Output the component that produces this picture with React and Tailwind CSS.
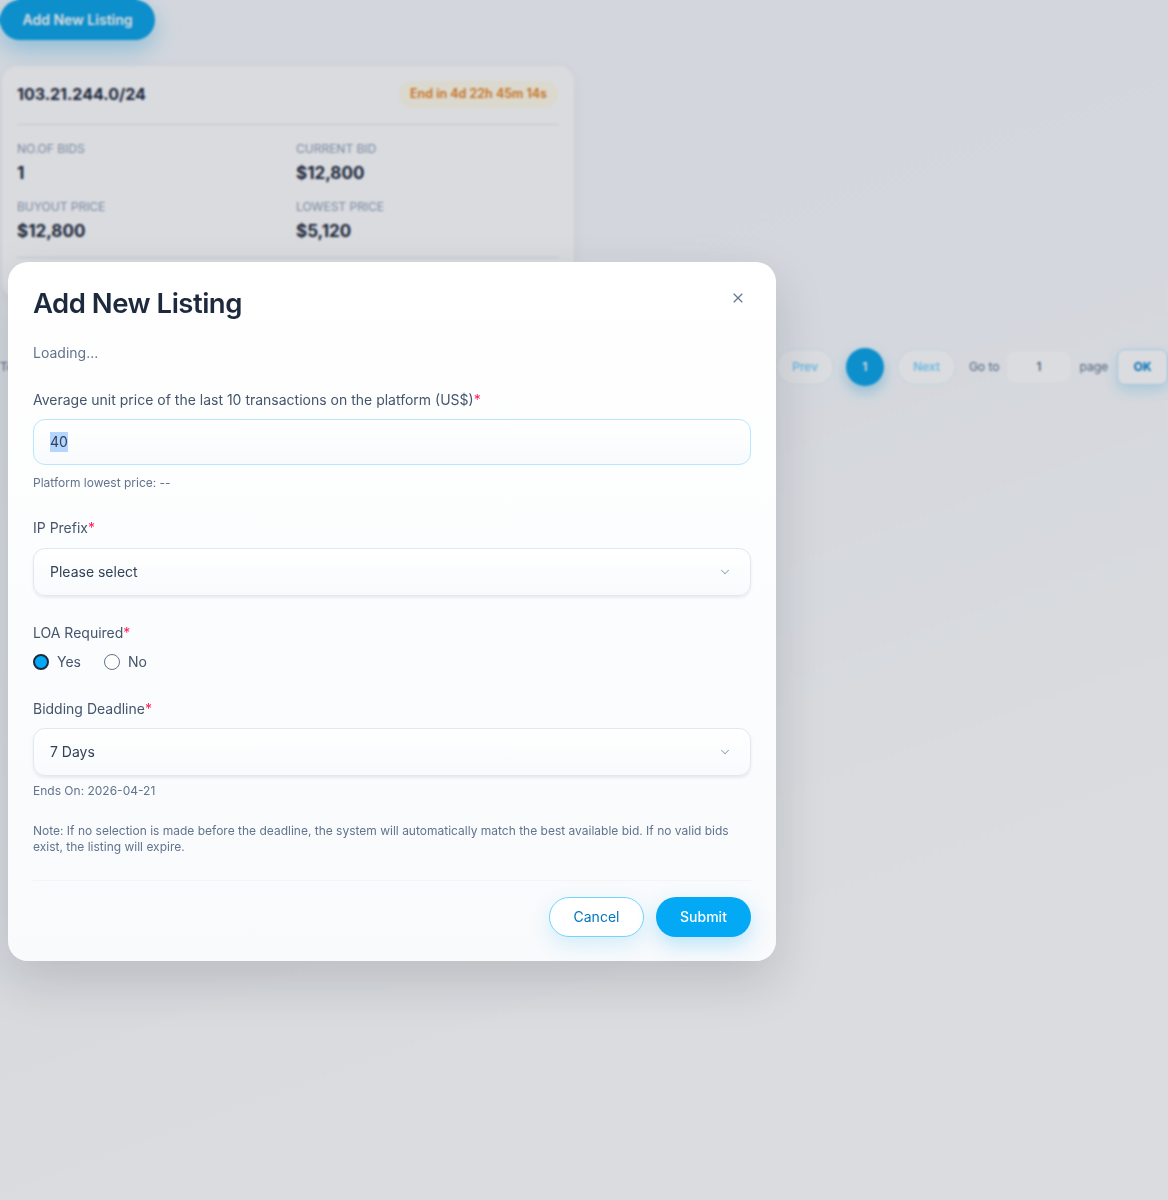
import { ChevronDown, X } from "lucide-react";

export default function App() {
  return (
    <div
      className="relative min-h-[1200px] w-full overflow-hidden bg-[linear-gradient(160deg,#f6f9fd_0%,#f7fafd_40%,#ffffff_75%)]"
      style={{ fontFamily: "Inter, 'Noto Sans', sans-serif" }}
    >
      {/* page behind the dialog */}
      <div className="flex flex-col">
        <div>
          <button className="h-[40px] w-[155px] rounded-full bg-[#0ea5e9] text-sm font-semibold text-white shadow-[0_10px_24px_rgba(14,165,233,0.35)]">
            Add New Listing
          </button>
        </div>

        <div className="ml-[2px] mt-[26px] w-[572px] rounded-2xl bg-white/80 px-[15px] pt-[15px] pb-[40px] shadow-[0_4px_16px_rgba(15,23,42,0.06)]">
          <div className="flex items-center justify-between border-b border-slate-200 pb-[16px]">
            <span className="text-base font-bold text-slate-800">103.21.244.0/24</span>
            <span className="mr-[1px] rounded-full bg-amber-50 px-[11px] py-[4px] text-[12.5px] font-semibold text-[#e8811a]">
              End in 4d 22h 45m 14s
            </span>
          </div>
          <div className="grid grid-cols-[279px_1fr] gap-y-[14px] border-b border-slate-200 pt-[16px] pb-[14px]">
            <Stat label="NO.OF BIDS" value="1" />
            <Stat label="CURRENT BID" value="$12,800" />
            <Stat label="BUYOUT PRICE" value="$12,800" />
            <Stat label="LOWEST PRICE" value="$5,120" />
          </div>
        </div>

        <div className="mt-[50px] flex items-center justify-between">
          <span className="text-xs text-slate-500">Total 1 items</span>
          <div className="flex items-center">
            <button className="h-[36px] w-[58px] rounded-full border border-sky-100 bg-white text-xs font-medium text-sky-300">
              Prev
            </button>
            <button className="ml-[12px] h-[38px] w-[38px] rounded-full bg-[#0ea5e9] text-xs font-semibold text-white shadow-[0_6px_14px_rgba(14,165,233,0.35)]">
              1
            </button>
            <button className="ml-[13px] h-[36px] w-[59px] rounded-full border border-sky-100 bg-white text-xs font-medium text-sky-300">
              Next
            </button>
            <span className="ml-[13px] text-xs text-slate-500">Go to</span>
            <div className="ml-[8px] flex h-[30px] w-[63px] items-center justify-center rounded-lg bg-white text-xs text-slate-700">
              1
            </div>
            <span className="ml-[9px] text-xs text-slate-500">page</span>
            <button className="ml-[9px] h-[36px] w-[51px] rounded-lg border border-sky-200 bg-white text-xs font-bold text-sky-600 shadow-[0_6px_14px_rgba(14,165,233,0.2)]">
              OK
            </button>
          </div>
        </div>
      </div>

      {/* overlay */}
      <div className="absolute inset-0 bg-[#0f172a]/[0.15] backdrop-blur-[1px]" />

      {/* dialog */}
      <div className="absolute left-[8px] top-[262px] w-[768px] rounded-[20px] bg-[linear-gradient(180deg,#ffffff_0%,#f8fafc_100%)] px-[25px] pt-[24px] pb-[24px] shadow-[0_20px_50px_rgba(15,23,42,0.15)]">
        <div className="flex items-start justify-between">
          <h2 className="text-[27.5px] font-semibold leading-[34px] tracking-[-0.5px] text-slate-800">
            Add New Listing
          </h2>
          <button className="mr-[5px] mt-[4px] text-slate-500">
            <X size={16} strokeWidth={1.75} />
          </button>
        </div>

        <p className="mt-[23px] text-sm leading-5 text-slate-500">Loading...</p>

        <Label className="mt-[27px]">
          Average unit price of the last 10 transactions on the platform (US$)
        </Label>
        <div className="mt-[9px] flex h-[46px] items-center rounded-xl border border-sky-200 bg-[linear-gradient(180deg,#ffffff_0%,#f8fafc_100%)] px-[16px] text-sm text-slate-700">
          <span className="bg-[#b4d5fe]">40</span>
        </div>
        <p className="mt-[10px] text-xs leading-4 text-slate-500">Platform lowest price: --</p>

        <Label className="mt-[27px]">IP Prefix</Label>
        <Select value="Please select" className="mt-[10px]" />

        <Label className="mt-[27px]">LOA Required</Label>
        <div className="mt-[9px] flex h-[20px] items-center text-sm text-slate-600">
          <span className="h-[16px] w-[16px] rounded-full border-2 border-slate-800 bg-[#03a9f4]" />
          <span className="ml-[8px]">Yes</span>
          <span className="ml-[23px] h-[16px] w-[16px] rounded-full border border-slate-500 bg-white" />
          <span className="ml-[8px]">No</span>
        </div>

        <Label className="mt-[27px]">Bidding Deadline</Label>
        <Select value="7 Days" className="mt-[9px]" />
        <p className="mt-[7px] text-xs leading-4 text-slate-500">Ends On: 2026-04-21</p>

        <p className="mt-[24px] text-xs leading-4 text-slate-500">
          Note: If no selection is made before the deadline, the system will automatically match the best available bid. If no valid bids exist, the listing will expire.
        </p>

        <div className="mt-[25px] border-t border-slate-100" />

        <div className="mt-[16px] flex justify-end gap-[12px]">
          <button className="h-[40px] w-[95px] rounded-full border border-sky-300 bg-white text-sm text-[#0277bd] shadow-[0_8px_20px_rgba(14,165,233,0.15)]">
            Cancel
          </button>
          <button className="h-[40px] w-[95px] rounded-full bg-[#03a9f4] text-sm font-medium text-white shadow-[0_8px_20px_rgba(3,169,244,0.25)]">
            Submit
          </button>
        </div>
      </div>
    </div>
  );
}

function Stat({ label, value }) {
  return (
    <div>
      <p className="text-xs uppercase leading-4 text-slate-400">{label}</p>
      <p className="mt-[4px] text-[17px] font-bold leading-6 text-slate-800">{value}</p>
    </div>
  );
}

function Label({ children, className = "" }) {
  return (
    <p className={`text-sm leading-5 text-slate-600 ${className}`}>
      {children}
      <span className="text-rose-500">*</span>
    </p>
  );
}

function Select({ value, className = "" }) {
  return (
    <div className={`flex h-[48px] items-center justify-between rounded-xl border border-slate-200 bg-[linear-gradient(180deg,#ffffff_0%,#f8fafc_100%)] pl-[16px] pr-[18px] text-sm text-slate-700 shadow-[0_2px_3px_rgba(15,23,42,0.08)] ${className}`}>
      <span>{value}</span>
      <ChevronDown size={14} strokeWidth={1.75} className="text-slate-400" />
    </div>
  );
}
